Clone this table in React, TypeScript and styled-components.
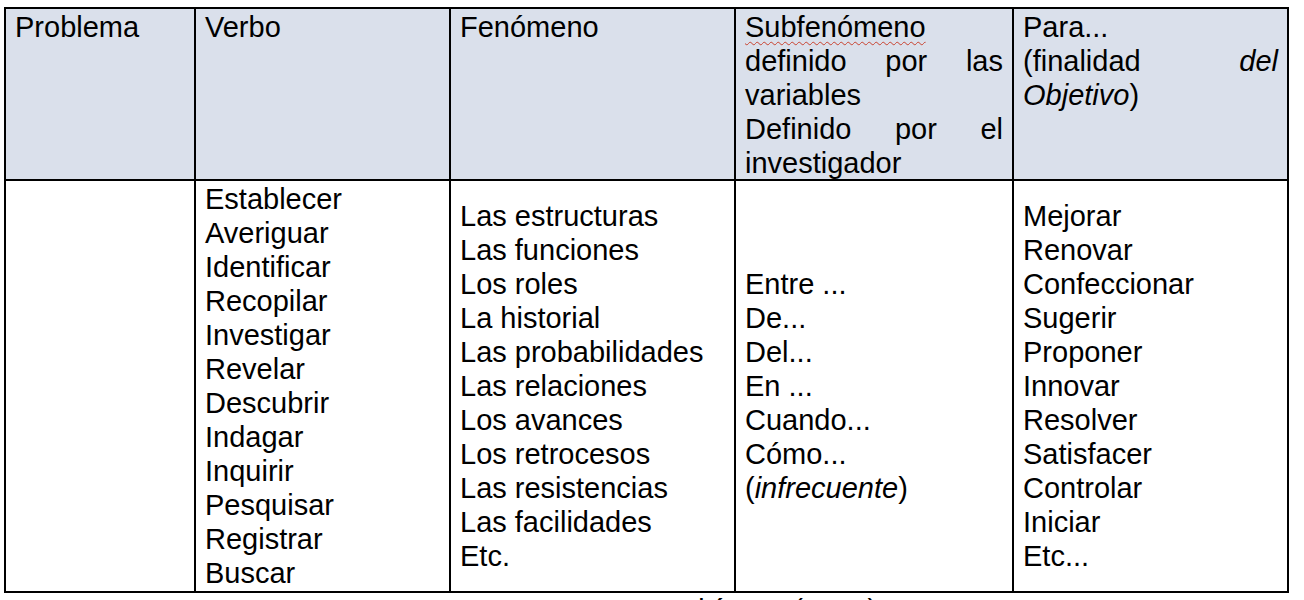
import React from "react";
import styled, { createGlobalStyle } from "styled-components";

const GlobalStyle = createGlobalStyle`
  html, body {
    margin: 0;
    padding: 0;
    background: #ffffff;
  }
  body {
    font-family: "Liberation Sans", Arial, Helvetica, sans-serif;
    color: #000000;
  }
`;

const Page = styled.main`
  padding: 7px 0 0 4px;
`;

const Table = styled.div`
  display: grid;
  grid-template-columns: 188px 253px 283px 276px 273px;
  grid-template-rows: 170px 410px;
  gap: 2px;
  padding: 2px;
  width: max-content;
  background: #000000;
  font-size: 29px;
  line-height: 34px;
`;

const HeadCell = styled.div`
  background: #dae0eb;
  padding: 1px 9px 0;
`;

const BodyCell = styled.div`
  background: #ffffff;
  padding: 0 9px;
  display: flex;
  flex-direction: column;
  justify-content: center;
`;

const Justified = styled.div`
  text-align: justify;
`;

const Line = styled.div`
  white-space: nowrap;
`;

const Em = styled.em`
  font-style: italic;
`;

const Squiggle = styled.span`
  text-decoration-line: underline;
  text-decoration-style: wavy;
  text-decoration-color: #c8412e;
  text-decoration-thickness: 1px;
  text-underline-offset: 4px;
`;

const Caption = styled.p`
  margin: 0;
  padding-left: 541px;
  font-size: 29px;
  line-height: 34px;
  white-space: nowrap;
`;

const verbos = [
  "Establecer",
  "Averiguar",
  "Identificar",
  "Recopilar",
  "Investigar",
  "Revelar",
  "Descubrir",
  "Indagar",
  "Inquirir",
  "Pesquisar",
  "Registrar",
  "Buscar",
];

const fenomenos = [
  "Las estructuras",
  "Las funciones",
  "Los roles",
  "La historial",
  "Las probabilidades",
  "Las relaciones",
  "Los avances",
  "Los retrocesos",
  "Las resistencias",
  "Las facilidades",
  "Etc.",
];

const subfenomenos = ["Entre ...", "De...", "Del...", "En ...", "Cuando...", "Cómo..."];

const finalidades = [
  "Mejorar",
  "Renovar",
  "Confeccionar",
  "Sugerir",
  "Proponer",
  "Innovar",
  "Resolver",
  "Satisfacer",
  "Controlar",
  "Iniciar",
  "Etc...",
];

export default function App() {
  return (
    <>
      <GlobalStyle />
      <Page>
        <Table>
          <HeadCell>Problema</HeadCell>
          <HeadCell>Verbo</HeadCell>
          <HeadCell>Fenómeno</HeadCell>
          <HeadCell>
            <Justified>
              <Squiggle>Subfenómeno</Squiggle> definido por las variables
            </Justified>
            <Justified>Definido por el investigador</Justified>
          </HeadCell>
          <HeadCell>
            <div>Para...</div>
            <Justified>
              (finalidad <Em>del Objetivo</Em>)
            </Justified>
          </HeadCell>

          <BodyCell />
          <BodyCell>
            {verbos.map((v) => (
              <Line key={v}>{v}</Line>
            ))}
          </BodyCell>
          <BodyCell>
            {fenomenos.map((f) => (
              <Line key={f}>{f}</Line>
            ))}
          </BodyCell>
          <BodyCell>
            {subfenomenos.map((s) => (
              <Line key={s}>{s}</Line>
            ))}
            <Line>
              (<Em>infrecuente</Em>)
            </Line>
          </BodyCell>
          <BodyCell>
            {finalidades.map((f) => (
              <Line key={f}>{f}</Line>
            ))}
          </BodyCell>
        </Table>
        <Caption>Fuente: Rodríguez (1999)</Caption>
      </Page>
    </>
  );
}
